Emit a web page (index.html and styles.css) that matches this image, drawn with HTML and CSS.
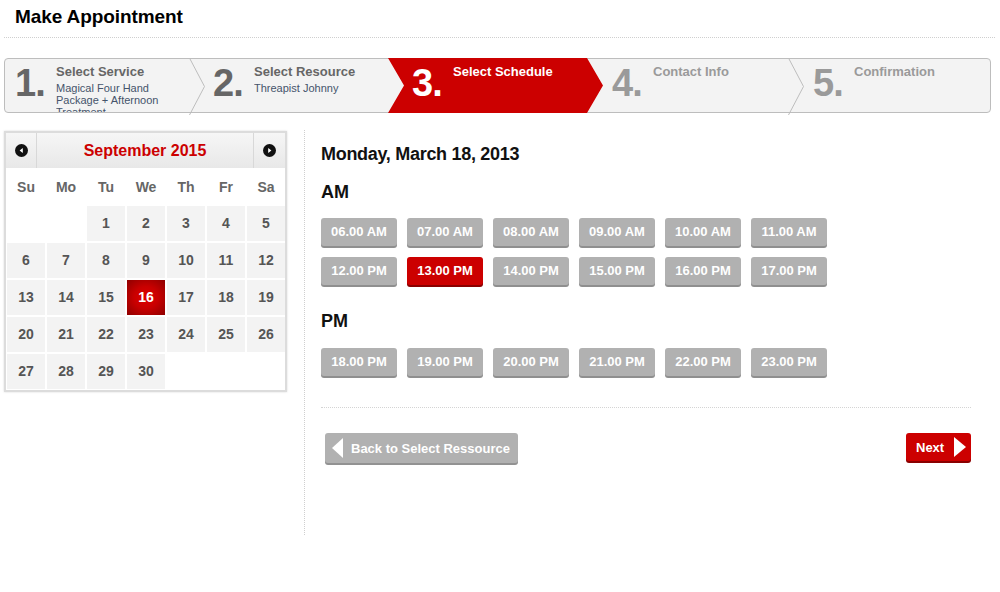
FILE: index.html
```html
<!DOCTYPE html>
<html>
<head>
<meta charset="utf-8">
<title>Make Appointment</title>
<link rel="stylesheet" href="styles.css">
</head>
<body>
<div class="page">
  <h1 class="title">Make Appointment</h1>

  <div class="steps">
    <div class="step step-first done">
      <div class="num">1.</div>
      <div class="stext">
        <div class="stitle">Select Service</div>
        <div class="ssub">Magical Four Hand Package + Afternoon Treatment</div>
      </div>
      <svg class="sep" width="17" height="57" viewBox="0 0 17 57"><polyline points="0.5,0 15.5,28.5 0.5,57" fill="none" stroke="#bdbdbd" stroke-width="1"/></svg>
    </div>
    <div class="step done">
      <div class="num">2.</div>
      <div class="stext">
        <div class="stitle">Select Resource</div>
        <div class="ssub">Threapist Johnny</div>
      </div>
    </div>
    <div class="step active">
      <div class="num">3.</div>
      <div class="stext">
        <div class="stitle">Select Schedule</div>
      </div>
    </div>
    <div class="step todo">
      <div class="num">4.</div>
      <div class="stext">
        <div class="stitle">Contact Info</div>
      </div>
      <svg class="sep" width="17" height="57" viewBox="0 0 17 57"><polyline points="0.5,0 15.5,28.5 0.5,57" fill="none" stroke="#bdbdbd" stroke-width="1"/></svg>
    </div>
    <div class="step todo step-last">
      <div class="num">5.</div>
      <div class="stext">
        <div class="stitle">Confirmation</div>
      </div>
    </div>
  </div>

  <div class="main">
    <div class="calendar">
      <div class="cal-head">
        <div class="cal-nav prev">
          <svg width="13" height="13" viewBox="0 0 13 13"><circle cx="6.5" cy="6.5" r="6.5" fill="#111"/><polygon points="7.8,4 7.8,9 4.6,6.5" fill="#fff"/></svg>
        </div>
        <div class="cal-month">September 2015</div>
        <div class="cal-nav next">
          <svg width="13" height="13" viewBox="0 0 13 13"><circle cx="6.5" cy="6.5" r="6.5" fill="#111"/><polygon points="5.2,4 5.2,9 8.4,6.5" fill="#fff"/></svg>
        </div>
      </div>
      <div class="cal-dow">
        <span>Su</span><span>Mo</span><span>Tu</span><span>We</span><span>Th</span><span>Fr</span><span>Sa</span>
      </div>
      <div class="cal-grid">
        <span class="empty"></span><span class="empty"></span>
        <span>1</span><span>2</span><span>3</span><span>4</span><span>5</span>
        <span>6</span><span>7</span><span>8</span><span>9</span><span>10</span><span>11</span><span>12</span>
        <span>13</span><span>14</span><span>15</span><span class="sel">16</span><span>17</span><span>18</span><span>19</span>
        <span>20</span><span>21</span><span>22</span><span>23</span><span>24</span><span>25</span><span>26</span>
        <span>27</span><span>28</span><span>29</span><span>30</span>
      </div>
    </div>

    <div class="schedule">
      <h2 class="date">Monday, March 18, 2013</h2>
      <h3 class="period">AM</h3>
      <div class="slots">
        <span class="slot">06.00 AM</span>
        <span class="slot">07.00 AM</span>
        <span class="slot">08.00 AM</span>
        <span class="slot">09.00 AM</span>
        <span class="slot">10.00 AM</span>
        <span class="slot">11.00 AM</span>
        <span class="slot">12.00 PM</span>
        <span class="slot slot-sel">13.00 PM</span>
        <span class="slot">14.00 PM</span>
        <span class="slot">15.00 PM</span>
        <span class="slot">16.00 PM</span>
        <span class="slot">17.00 PM</span>
      </div>
      <h3 class="period pm">PM</h3>
      <div class="slots">
        <span class="slot">18.00 PM</span>
        <span class="slot">19.00 PM</span>
        <span class="slot">20.00 PM</span>
        <span class="slot">21.00 PM</span>
        <span class="slot">22.00 PM</span>
        <span class="slot">23.00 PM</span>
      </div>
      <div class="divider"></div>
      <div class="actions">
        <a class="btn btn-back">
          <svg width="12" height="20" viewBox="0 0 12 20"><polygon points="11,0 11,20 0,10" fill="#fff"/></svg>
          <span>Back to Select Ressource</span>
        </a>
        <a class="btn btn-next">
          <span>Next</span>
          <svg width="12" height="20" viewBox="0 0 12 20"><polygon points="0,0 0,20 12,10" fill="#fff"/></svg>
        </a>
      </div>
    </div>
  </div>
</div>
</body>
</html>
```

FILE: styles.css
```css
* { box-sizing: border-box; }

html, body {
  margin: 0;
  padding: 0;
  background: #fff;
  font-family: "Liberation Sans", Arial, sans-serif;
  color: #111;
}

.page {
  width: 1000px;
  padding: 0 5px 0 4px;
}

.title {
  margin: 0;
  padding: 7px 11px 10px;
  font-size: 19px;
  line-height: 20px;
  font-weight: bold;
  color: #000;
  letter-spacing: -0.1px;
  border-bottom: 1px dotted #cfcfcf;
}

/* ---------- steps ---------- */
.steps {
  margin-top: 20px;
  width: 987px;
  height: 55px;
  display: flex;
  border: 1px solid #bdbdbd;
  border-radius: 4px;
  background: #f3f3f3;
}

.step {
  position: relative;
  width: 199px;
  height: 100%;
  display: flex;
  padding-left: 24px;
}

.step-first { width: 184px; padding-left: 10px; }
.step:nth-child(4) { width: 201px; padding-left: 25px; }
.step-last { flex: 1; padding-left: 25px; }

.step .sep {
  position: absolute;
  left: 100%;
  top: -1px;
  z-index: 2;
}

.step.active::before {
  content: "";
  position: absolute;
  left: 0;
  top: -1px;
  bottom: -1px;
  width: 215px;
  background: #cc0000;
  clip-path: polygon(0 0, 199px 0, 215px 50%, 199px 100%, 0 100%, 16px 50%);
  z-index: 0;
}

.num {
  position: relative;
  z-index: 1;
  width: 41px;
  flex: none;
  margin-top: 5px;
  font-size: 38px;
  line-height: 38px;
  font-weight: bold;
  color: #666;
  letter-spacing: -1px;
}

.stext {
  position: relative;
  z-index: 1;
  flex: 1;
  height: 100%;
  overflow: hidden;
  padding-top: 5px;
  padding-right: 20px;
}

.stitle {
  font-size: 13px;
  line-height: 15px;
  font-weight: bold;
  color: #666;
}

.ssub {
  margin-top: 3px;
  font-size: 11px;
  line-height: 12px;
  color: #45546b;
}

.step.active .num,
.step.active .stitle { color: #fff; }

.step.todo .num,
.step.todo .stitle { color: #9a9a9a; }

/* ---------- main ---------- */
.main {
  display: flex;
  margin-top: 17px;
  align-items: flex-start;
}

.calendar {
  width: 283px;
  margin-top: 1px;
  border: 2px solid #dcdcdc;
  box-shadow: 0 0 2px rgba(0,0,0,0.15);
  background: #fff;
}

.cal-head {
  height: 35px;
  display: flex;
  align-items: stretch;
  background: linear-gradient(#f6f6f6, #e8e8e8);
}

.cal-nav {
  width: 31px;
  display: flex;
  align-items: center;
  justify-content: center;
}
.cal-nav.prev { border-right: 1px solid #d8d8d8; padding-left: 1px; }
.cal-nav.next { border-left: 1px solid #d8d8d8; width: 32px; }
.cal-nav svg { display: block; }

.cal-month {
  flex: 1;
  text-align: center;
  font-size: 16px;
  font-weight: bold;
  color: #cc0000;
  line-height: 35px;
}

.cal-dow,
.cal-grid {
  display: grid;
  grid-template-columns: repeat(7, 38px);
  column-gap: 2px;
  padding: 0 0 0 1px;
}

.cal-dow span {
  height: 38px;
  line-height: 38px;
  text-align: center;
  font-size: 14px;
  font-weight: bold;
  color: #666;
}

.cal-grid {
  grid-auto-rows: 35px;
  row-gap: 2px;
  padding-bottom: 1px;
}

.cal-grid span {
  background: #f3f3f3;
  text-align: center;
  line-height: 35px;
  font-size: 14px;
  font-weight: bold;
  color: #555;
}

.cal-grid span.empty { background: transparent; }

.cal-grid span.sel {
  background: radial-gradient(ellipse at center, #e00000 0%, #c80000 45%, #8e0000 100%);
  color: #fff;
}

/* ---------- schedule ---------- */
.schedule {
  margin-left: 17px;
  flex: 1;
  min-height: 405px;
  border-left: 1px dotted #cfcfcf;
  padding: 13px 20px 0 16px;
}

.date {
  margin: 0;
  font-size: 18px;
  line-height: 22px;
  font-weight: bold;
  color: #111;
  letter-spacing: -0.3px;
}

.period {
  margin: 16px 0 0;
  font-size: 18px;
  line-height: 22px;
  font-weight: bold;
  color: #111;
}

.period.pm { margin-top: 25px; }

.slots {
  margin-top: 15px;
  display: grid;
  grid-template-columns: repeat(6, 76px);
  column-gap: 10px;
  row-gap: 11px;
}

.period.pm + .slots { margin-top: 16px; }

.slot {
  height: 28px;
  line-height: 28px;
  border-radius: 3px;
  background: #b1b1b1;
  box-shadow: 0 2px 0 #8f8f8f;
  color: #fff;
  font-size: 13px;
  font-weight: bold;
  text-align: center;
}

.slot.slot-sel {
  background: #cc0000;
  box-shadow: 0 2px 0 #8a0000;
}

.divider {
  margin-top: 31px;
  border-top: 1px dotted #d4d4d4;
  width: 650px;
}

.actions {
  margin-top: 25px;
  width: 650px;
  display: flex;
  justify-content: space-between;
  align-items: flex-start;
}

.btn {
  display: flex;
  align-items: center;
  border-radius: 3px;
  color: #fff;
  font-size: 13px;
  font-weight: bold;
  white-space: nowrap;
  cursor: pointer;
}

.btn svg { display: block; flex: none; }

.btn-back {
  margin-left: 4px;
  width: 193px;
  height: 30px;
  padding-left: 7px;
  gap: 7px;
  background: #b1b1b1;
  box-shadow: 0 2px 0 #929292;
}

.btn-next {
  width: 65px;
  height: 28px;
  padding-left: 10px;
  gap: 10px;
  background: #cc0000;
  box-shadow: 0 2px 0 #8a0000;
}
```
